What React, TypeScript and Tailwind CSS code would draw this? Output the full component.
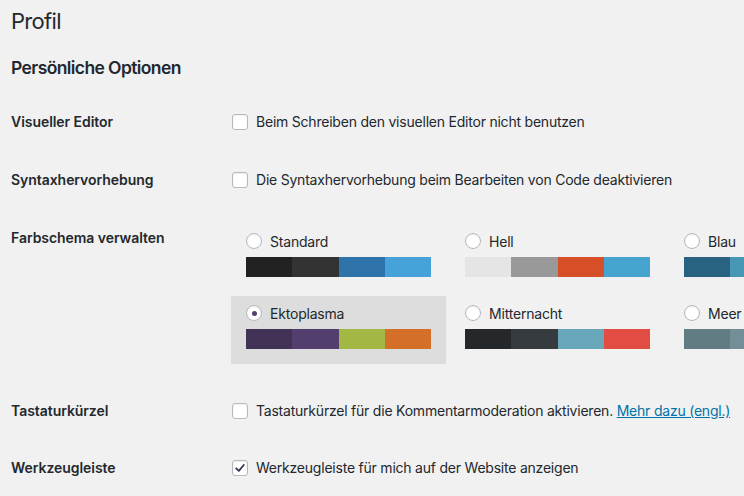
import React from 'react';

type Scheme = { name: string; colors: string[]; selected?: boolean };

const rowOne: Scheme[] = [
  { name: 'Standard', colors: ['#222222', '#333333', '#2e73aa', '#45a3d9'] },
  { name: 'Hell', colors: ['#e5e5e5', '#999999', '#d64f28', '#45a5cf'] },
  { name: 'Blau', colors: ['#2a6381', '#4796b3', '#52accc', '#74b6ce'] },
];

const rowTwo: Scheme[] = [
  { name: 'Ektoplasma', colors: ['#413256', '#523f6d', '#a3b745', '#d46f29'], selected: true },
  { name: 'Mitternacht', colors: ['#25282b', '#363b3f', '#69a8bb', '#e14d43'] },
  { name: 'Meer', colors: ['#627c83', '#738e96', '#9ebaa0', '#aa9d88'] },
];

const Checkbox = ({ checked = false }: { checked?: boolean }) => (
  <span className="ml-[1px] flex h-4 w-4 shrink-0 items-center justify-center rounded-[3px] border border-[#b4b9be] bg-white shadow-[inset_0_1px_2px_rgba(0,0,0,0.07)]">
    {checked && (
      <svg width="12" height="12" viewBox="0 0 12 12">
        <path d="M2.2 6.3 L4.8 8.8 L9.8 3" fill="none" stroke="#3b2f52" strokeWidth="1.8" strokeLinecap="round" strokeLinejoin="round" />
      </svg>
    )}
  </span>
);

const Radio = ({ checked = false }: { checked?: boolean }) => (
  <span className="flex h-4 w-4 shrink-0 items-center justify-center rounded-full border border-[#b4b9be] bg-white shadow-[inset_0_1px_2px_rgba(0,0,0,0.07)]">
    {checked && <span className="h-[5px] w-[5px] rounded-full bg-[#523f6d]" />}
  </span>
);

const SchemeOption = ({ scheme }: { scheme: Scheme }) => (
  <div className={`w-[215px] shrink-0 px-[15px] pt-[5px] pb-[15px] ${scheme.selected ? 'bg-[#dddddd]' : ''}`}>
    <div className="flex h-6 items-center gap-2">
      <Radio checked={scheme.selected} />
      <span className="pt-[1px] text-[14px] leading-5 tracking-[-0.2px]">{scheme.name}</span>
    </div>
    <div className="mt-1 flex h-5 w-[185px]">
      {scheme.colors.map((c, i) => (
        <div key={i} className="h-full flex-1" style={{ backgroundColor: c }} />
      ))}
    </div>
  </div>
);

const CheckRow = ({ label, text, checked, link, className }: { label: string; text: string; checked?: boolean; link?: string; className: string }) => (
  <div className={`flex items-center ${className}`}>
    <div className="w-[220px] shrink-0 text-[14px] font-semibold leading-5 tracking-[-0.05px]">{label}</div>
    <div className="flex items-center gap-2 whitespace-nowrap text-[14px] leading-5 tracking-[-0.22px]">
      <Checkbox checked={checked} />
      <span>
        {text}
        {link && (
          <>
            {' '}
            <a href="#" className="text-[#0073aa] underline">{link}</a>
          </>
        )}
      </span>
    </div>
  </div>
);

export default function App() {
  return (
    <div className="h-[496px] w-[744px] overflow-hidden bg-[#f1f1f1] pl-[11px] font-['Inter','Liberation_Sans',sans-serif] text-[#23282d]">
      <h1 className="pt-[6px] text-[22px] font-normal leading-[30px] tracking-[-0.7px]">Profil</h1>
      <h2 className="mt-[20px] text-[17.5px] font-semibold leading-6 tracking-[-0.6px]">Persönliche Optionen</h2>

      <CheckRow className="mt-[12px] h-[59px]" label="Visueller Editor" text="Beim Schreiben den visuellen Editor nicht benutzen" />
      <CheckRow className="h-[58px]" label="Syntaxhervorhebung" text="Die Syntaxhervorhebung beim Bearbeiten von Code deaktivieren" />

      <div className="flex h-[173px]">
        <div className="w-[220px] shrink-0 pt-[19px] text-[14px] font-semibold leading-5 tracking-[-0.05px]">Farbschema verwalten</div>
        <div className="flex flex-col gap-1 pt-[15px]">
          <div className="flex gap-1">
            {rowOne.map(s => <SchemeOption key={s.name} scheme={s} />)}
          </div>
          <div className="flex gap-1">
            {rowTwo.map(s => <SchemeOption key={s.name} scheme={s} />)}
          </div>
        </div>
      </div>

      <CheckRow className="h-[58px]" label="Tastaturkürzel" text="Tastaturkürzel für die Kommentarmoderation aktivieren." link="Mehr dazu (engl.)" />
      <CheckRow className="h-[56px]" label="Werkzeugleiste" text="Werkzeugleiste für mich auf der Website anzeigen" checked />
    </div>
  );
}
